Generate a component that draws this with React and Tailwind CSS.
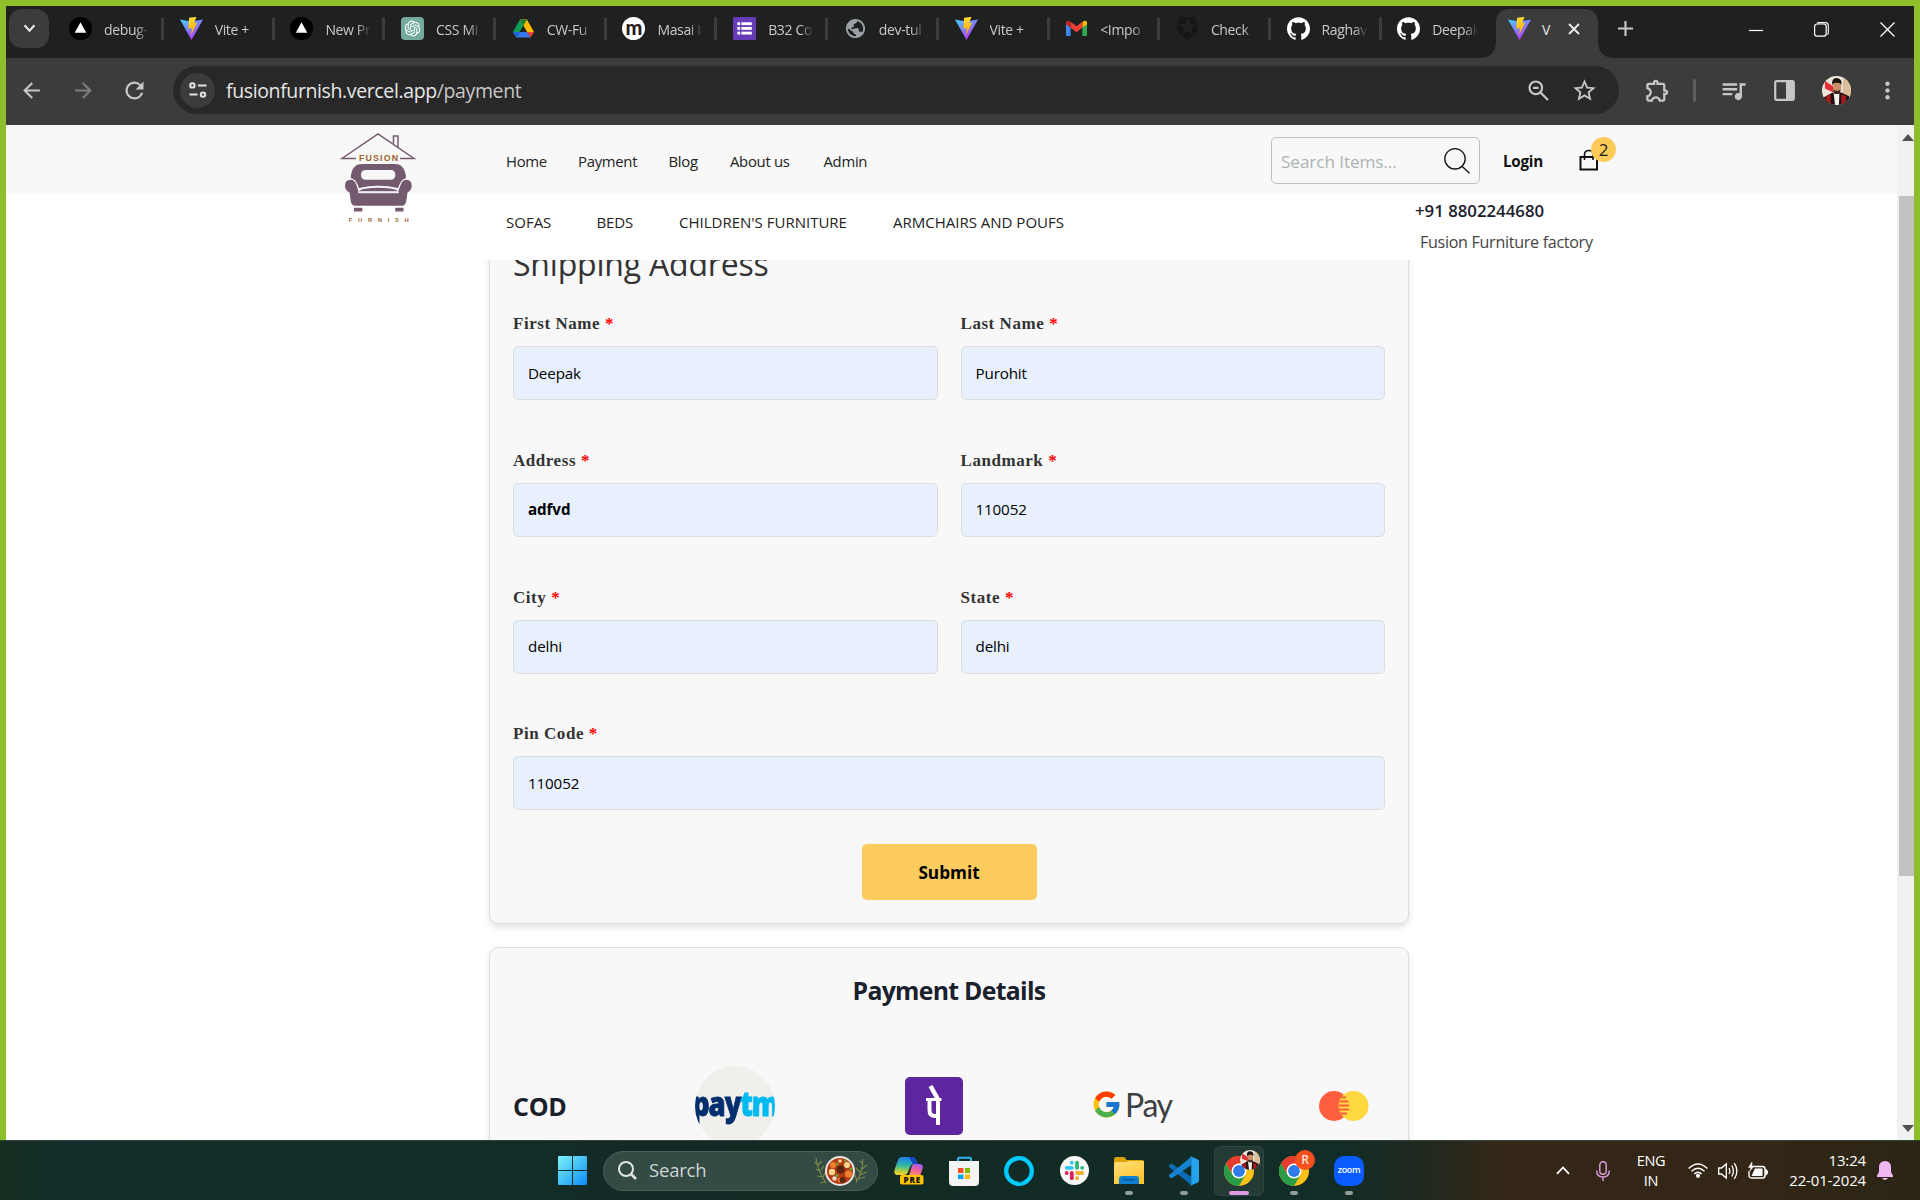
import React from "react";
import { FcGoogle } from "react-icons/fc";
import { RiOpenaiFill } from "react-icons/ri";
import { SiGithub, SiAuth0 } from "react-icons/si";
import {
  MdArrowBack,
  MdArrowForward,
  MdRefresh,
  MdStarBorder,
  MdOutlineExtension,
  MdQueueMusic,
  MdMoreVert,
  MdPublic,
} from "react-icons/md";

/* ---------- favicons ---------- */

const VercelIcon = () => (
  <svg viewBox="0 0 24 24" className="size-[23px]">
    <circle cx="12" cy="12" r="12" fill="#000" />
    <path d="M12 5.5 18 16.5H6Z" fill="#fff" />
  </svg>
);

const ViteIcon = () => (
  <svg viewBox="0 0 24 24" className="size-[23px] shrink-0">
    <defs>
      <linearGradient id="vite-body" x1="0" y1="0" x2="0.6" y2="1">
        <stop offset="0" stopColor="#41d1ff" />
        <stop offset="1" stopColor="#bd34fe" />
      </linearGradient>
      <linearGradient id="vite-bolt" x1="0" y1="0" x2="0.2" y2="1">
        <stop offset="0" stopColor="#ffea83" />
        <stop offset="0.1" stopColor="#ffdd35" />
        <stop offset="1" stopColor="#ffa800" />
      </linearGradient>
    </defs>
    <path d="M0 2.6 12 4.7 24 2.6 12 24Z" fill="url(#vite-body)" />
    <path d="M9.5.9 17.2-.2 14.7 6.4 18 5.8 11.6 18.8 12.4 11.4 8.6 12.2Z" fill="url(#vite-bolt)" />
  </svg>
);

const GptIcon = () => (
  <div className="flex size-[23px] items-center justify-center rounded-[4px] bg-[#74aa9c]">
    <RiOpenaiFill className="size-[19px] text-white" />
  </div>
);

const DriveIcon = () => (
  <svg viewBox="0 0 24 24" className="size-[23px]">
    <path d="M8.3 2.5 12 8.9 4.3 21.5 1 15.6Z" fill="#0f9d58" />
    <path d="M8.3 2.5H15.6L23 15.6H15.8Z" fill="#ffba00" />
    <path d="M8.3 2.5H15.6L12 8.9Z" fill="#188038" />
    <path d="M8.2 15.6H15.8L19.4 21.5H4.6Z" fill="#3779e8" />
    <path d="M1 15.6H8.2L4.6 21.5Z" fill="#2063dd" />
    <path d="M15.8 15.6H23L19.4 21.5Z" fill="#ea4335" />
  </svg>
);

const MasaiIcon = () => (
  <div className="flex size-[23px] items-center justify-center rounded-full bg-white font-['Lato',sans-serif] text-[20px] leading-[18px] font-black text-[#2c1a1a]">
    <span className="-mt-[4px]">m</span>
  </div>
);

const FormsIcon = () => (
  <svg viewBox="0 0 24 24" className="size-[23px]">
    <rect width="24" height="24" rx="1.5" fill="#673ab7" />
    <g fill="#fff">
      <rect x="4.5" y="5.5" width="3" height="3" />
      <rect x="8.8" y="5.5" width="10.8" height="3" />
      <rect x="4.5" y="10.4" width="3" height="3" />
      <rect x="8.8" y="10.4" width="10.8" height="3" />
      <rect x="4.5" y="15.3" width="3" height="3" />
      <rect x="8.8" y="15.3" width="10.8" height="3" />
    </g>
  </svg>
);

const GmailIcon = () => (
  <svg viewBox="0 0 24 24" className="size-[23px]">
    <path d="M1 6.5V18.6Q1 19.9 2.4 19.9H5.9V10.5Z" fill="#4285f4" />
    <path d="M18.1 10.5V19.9H21.6Q23 19.9 23 18.6V6.5Z" fill="#34a853" />
    <path d="M18.1 5.3V11.2L23 7.5V5.8Q23 3.8 21 3.8 20 3.8 18.1 5.3Z" fill="#fbbc04" />
    <path d="M5.9 11.2V5L12 9.6 18.1 5V11.2L12 15.8Z" fill="#ea4335" />
    <path d="M1 5.8V7.5L5.9 11.2V5.3Q4 3.8 3 3.8 1 3.8 1 5.8Z" fill="#c5221f" />
  </svg>
);

const GlobeIcon = () => <MdPublic className="size-[25px] -rotate-12 text-[#9aa0a6]" />;
const AuthIcon = () => <SiAuth0 className="size-[23px] text-[#151617]" />;
const GithubIcon = () => <SiGithub className="size-[23px] text-white" />;

const TABS = [
  ["debug-", VercelIcon],
  ["Vite +", ViteIcon],
  ["New Pr", VercelIcon],
  ["CSS Mi", GptIcon],
  ["CW-Fu", DriveIcon],
  ["Masai I", MasaiIcon],
  ["B32 Co", FormsIcon],
  ["dev-tul", GlobeIcon],
  ["Vite +", ViteIcon],
  ["<Impo", GmailIcon],
  ["Check", AuthIcon],
  ["Raghav", GithubIcon],
  ["Deepak", GithubIcon],
];

/* ---------- browser chrome ---------- */

function TabStrip() {
  return (
    <div className="flex h-[52px] items-start bg-[#1f2120] pt-[3px] pl-[3px]">
      <button className="flex h-[39px] w-10 items-center justify-center rounded-[13px] bg-[#3c3c3c]">
        <svg viewBox="0 0 14 10" className="h-[9px] w-[13px]">
          <path d="M1.5 1.5 7 7.5 12.5 1.5" fill="none" stroke="#e6e6e6" strokeWidth="2.4" />
        </svg>
      </button>
      <div className="ml-1 flex h-[49px] pt-2">
        {TABS.map(([title, Icon], i) => (
          <div key={i} className="flex h-[23px] w-[110.7px] items-center pl-4">
            <div className="flex w-[23px] shrink-0 justify-center">
              <Icon />
            </div>
            <span className="mt-[3px] ml-3 w-[54px] shrink-0 text-[14px] leading-6 tracking-[-0.35px] whitespace-nowrap text-[#c8c9c9] [mask-image:linear-gradient(to_right,#000_32px,transparent_46px)]">
              {title}
            </span>
            {i < TABS.length - 1 && <i className="ml-[3px] h-[23px] w-[3px] shrink-0 rounded-full bg-[#3c3c3c]" />}
          </div>
        ))}
      </div>
      <div className="-ml-[13px] flex h-[49px]">
        <svg viewBox="0 0 17 17" className="mt-8 size-[17px]">
          <path d="M17 0V17H0Q17 17 17 0Z" fill="#3c3c3c" />
        </svg>
        <div className="flex h-[49px] w-[102px] items-start rounded-t-[13px] bg-[#3c3c3c] pt-2 pl-3">
          <ViteIcon />
          <span className="mt-px ml-[11px] w-3 text-[14px] leading-6 text-[#e3e3e3]">V</span>
          <svg viewBox="0 0 12 12" className="mt-[6px] ml-[14px] size-3">
            <path d="M1 1 11 11M11 1 1 11" stroke="#e8e8e8" strokeWidth="2" />
          </svg>
        </div>
        <svg viewBox="0 0 17 17" className="mt-8 size-[17px]">
          <path d="M0 0V17H17Q0 17 0 0Z" fill="#3c3c3c" />
        </svg>
      </div>
      <svg viewBox="0 0 14 14" className="mt-[12px] ml-[3px] size-[15px]">
        <path d="M7 0V14M0 7H14" stroke="#c7c7c7" strokeWidth="2" />
      </svg>
      <div className="mt-[13px] mr-[19px] ml-auto flex items-center gap-[51px]">
        <svg viewBox="0 0 14 14" className="size-[14px]">
          <path d="M0 7.5H14" stroke="#fff" strokeWidth="1.2" />
        </svg>
        <svg viewBox="0 0 15 15" className="size-[15px]">
          <rect x="0.6" y="2" width="11.6" height="12.2" rx="2.4" fill="none" stroke="#fff" strokeWidth="1.2" />
          <path d="M3 1.2Q3.6.6 5 .6H11.4Q14.3.6 14.3 3.6V10.4Q14.3 11.8 13.4 12.6" fill="none" stroke="#fff" strokeWidth="1.1" />
        </svg>
        <svg viewBox="0 0 15 15" className="size-[15px]">
          <path d="M.5.5 14.5 14.5M14.5.5.5 14.5" stroke="#fff" strokeWidth="1.3" />
        </svg>
      </div>
    </div>
  );
}

const Avatar = ({ className }) => (
  <svg viewBox="0 0 30 30" className={className}>
    <defs>
      <clipPath id="avatar-clip">
        <circle cx="15" cy="15" r="15" />
      </clipPath>
    </defs>
    <g clipPath="url(#avatar-clip)">
      <rect width="30" height="30" fill="#eee6da" />
      <path d="M22 0H30V22H21Z" fill="#dcbf9a" />
      <path d="M3 5 12 11V17L3 13Z" fill="#e0302f" />
      <path d="M2 30V22L11 17H20L28 21V30Z" fill="#201113" />
      <path d="M4 21 9 19V30H5ZM20 19 25 21 24 30H20Z" fill="#a81a1c" />
      <path d="M12 17H18L17.500 30H13.500Z" fill="#f4f2f0" />
      <ellipse cx="15.5" cy="11.5" rx="4.3" ry="6" fill="#c98d68" />
      <path d="M11.5 14Q15.5 17 19.5 14L18 18.5H13Z" fill="#3d241a" />
      <path d="M10.500 10Q9.500 2 15 2 21.500 2.500 20 9.500 19 6.500 15 7 11.500 6.500 10.500 10Z" fill="#1c1210" />
    </g>
  </svg>
);

function Toolbar() {
  return (
    <div className="flex h-[67px] items-center bg-[#3c3c3c] pb-[3px] text-[#c7c7c7]">
      <MdArrowBack className="ml-[13px] size-[25px]" />
      <MdArrowForward className="ml-[27px] size-[25px] text-[#7d7d7d]" />
      <MdRefresh className="ml-[25px] size-[27px]" />
      <div className="ml-[25px] flex h-12 w-[1446px] items-center rounded-full bg-[#282828] pl-[7px]">
        <div className="flex size-[35px] items-center justify-center rounded-full bg-[#3c3c3c]">
          <svg viewBox="0 0 18 16" className="h-[16px] w-[18px]" fill="none" stroke="#e3e3e3" strokeWidth="2">
            <circle cx="3.4" cy="3.4" r="2.2" />
            <path d="M9 3.4H17.5M0.500 12.6H8.5" />
            <circle cx="14" cy="12.6" r="2.2" />
          </svg>
        </div>
        <span className="mt-[2px] ml-[11px] text-[19.5px] leading-7 tracking-[-0.38px] text-[#e6e6e6]">
          fusionfurnish.vercel.app<span className="text-[#c7c7c7]">/payment</span>
        </span>
        <svg viewBox="0 0 21 21" className="mr-px ml-auto size-[21px]" fill="none" stroke="#c7c7c7" strokeWidth="2.2">
          <circle cx="7.800" cy="7.800" r="6.300" />
          <path d="M12.500 12.500 20 20M5 7.800H10.600" />
        </svg>
        <MdStarBorder className="mr-[21px] ml-[21px] size-[27px]" />
      </div>
      <MdOutlineExtension className="ml-[25px] size-[27px]" />
      <i className="ml-[22px] h-[23px] w-[3px] rounded-full bg-[#5e5e5e]" />
      <MdQueueMusic className="ml-[23px] size-[29px]" />
      <svg viewBox="0 0 21 21" className="ml-[26px] size-[21px]">
        <rect x="1.200" y="1.200" width="18.600" height="18.600" rx="1.500" fill="none" stroke="#c7c7c7" strokeWidth="2.200" />
        <rect x="12" y="1" width="8" height="19" fill="#c7c7c7" />
      </svg>
      <Avatar className="ml-[27px] size-[29px]" />
      <MdMoreVert className="ml-[23px] size-[27px]" />
    </div>
  );
}

/* ---------- site header ---------- */

const Logo = () => (
  <svg viewBox="0 0 76 92" className="absolute top-[7px] left-[334px] h-[92px] w-[76px]">
    <g fill="none" stroke="#745a6e" strokeWidth="1.500">
      <path d="M16 26.500H2L38 2 74 26.500H60" />
      <path d="M53.500 11.500V4H58V15.500" />
    </g>
    <text x="38.500" y="29" textAnchor="middle" fontSize="8.800" fontWeight="700" fill="#9a6531" textLength="39" fontFamily="Liberation Sans, sans-serif">
      FUSION
    </text>
    <path
      fillRule="evenodd"
      d="M10.700 45Q12 32 22 32H55Q64.500 32 66 45 66 46.500 63 47.500 60.500 49 58 56Q38.500 51.500 19 56 16.500 49 14 47.500 10.700 46.500 10.700 45ZM26 38Q21 38 21 43 21 47.700 26 47.700H50.500Q55.300 47.700 55.300 43 55.300 38 50.500 38Z"
      fill="#745a6e"
    />
    <path
      d="M5 54Q5 47.700 10.500 47.700 14.500 47.700 16 52L18.300 58.600V61H58.500V58.600L61 52Q62.500 47.700 66.500 47.700 71.700 47.700 71.700 54 71.700 58 67.500 60.500L66.300 69Q65.500 73.700 62 73.700H15Q11.500 73.700 10.700 69L9.500 60.500Q5 58 5 54Z"
      fill="#745a6e"
    />
    <path d="M18.500 59.300Q22 56 38.500 55.800 55 56 58 59.300Z" fill="#745a6e" />
    <path d="M18.500 60.500H58.300" stroke="#f3eef2" strokeWidth="1.300" />
    <path d="M14 75.800H22.300V79.500H14ZM55.200 75.800H63.500V79.500H55.200Z" fill="#745a6e" />
    <text x="8.800" y="90.300" fontSize="5.800" fontWeight="700" fill="#9a6a3c" textLength="60" fontFamily="Liberation Sans, sans-serif">
      FURNISH
    </text>
  </svg>
);

function SiteHeader() {
  return (
    <header className="relative h-[135px] w-[1891px] bg-white">
      <div className="flex h-[69px] items-center bg-[#f8f8f8] pl-[500px]">
        <nav className="flex gap-[30.5px] pt-[3px] text-[14.9px] leading-6 tracking-[-0.3px] whitespace-nowrap text-[#222]">
          <a className="w-[41.500px]">Home</a>
          <a className="w-[60px]">Payment</a>
          <a className="w-[31px]">Blog</a>
          <a className="w-[63px]">About us</a>
          <a>Admin</a>
        </nav>
        <div className="mt-[2px] ml-auto flex h-[47px] w-[209px] items-center justify-between rounded-[5px] border border-[#bfbfbf] pr-[9px] pl-[9px]">
          <span className="mt-[2px] text-[17.200px] leading-7 tracking-[-0.1px] text-[#adb3b3]">Search Items...</span>
          <svg viewBox="0 0 26 26" className="size-[26px]" fill="none" stroke="#111" strokeWidth="1.300">
            <circle cx="11" cy="10.800" r="10.200" />
            <path d="M18 18.200 25.500 25.200" />
          </svg>
        </div>
        <a className="mt-[3px] ml-[23px] w-[76px] text-[15.200px] leading-6 font-bold tracking-[-0.250px] text-[#111]">Login</a>
        <div className="relative mt-[3px] mr-[298px] h-6 w-5">
          <svg viewBox="0 0 20 22" className="h-[22px] w-5" fill="none" stroke="#111" strokeWidth="2">
            <path d="M1.500 8H18V20.500H1.500Z" />
            <path d="M5.500 11V5.500Q5.500 1.500 9.800 1.500 14 1.500 14 5.500V11" strokeWidth="1.600" />
          </svg>
          <span className="absolute -top-[12px] left-[12px] flex size-[25px] items-center justify-center rounded-full bg-[#fccb5a] text-[17px] leading-none text-[#222]">
            2
          </span>
        </div>
      </div>
      <div className="flex h-[66px] pl-[500px] text-[#222]">
        <nav className="mt-[16px] flex gap-[45.500px] text-[15px] leading-6 whitespace-nowrap">
          <a className="w-[45px]">SOFAS</a>
          <a className="w-[37px] tracking-[-0.100px]">BEDS</a>
          <a className="w-[168.500px]">CHILDREN'S FURNITURE</a>
          <a>ARMCHAIRS AND POUFS</a>
        </nav>
        <div className="mt-[5px] mr-[298px] ml-auto w-[184px] whitespace-nowrap">
          <p className="text-[16.800px] leading-6 font-semibold text-[#1a202c]">+91 8802244680</p>
          <p className="mt-[7px] ml-[5px] text-[16.100px] leading-6 tracking-[-0.300px] text-[#444]">Fusion Furniture factory</p>
        </div>
      </div>
      <Logo />
    </header>
  );
}

/* ---------- form ---------- */

function Field({ label, value, bold, wide }) {
  return (
    <div className={wide ? "col-span-2" : ""}>
      <label className="block h-6 font-['Liberation_Serif',serif] text-[17px] leading-[25px] font-bold tracking-[0.550px] text-[#333]">
        {label} <span className="text-[#f00]">*</span>
      </label>
      <div
        className={
          "mt-[11px] flex h-[54px] items-center rounded-[5px] border border-[#ddd] bg-[#e8f0fe] px-[14px] text-[15.200px] text-black " +
          (bold ? "font-bold tracking-[-0.100px]" : "tracking-[-0.150px]")
        }
      >
        {value}
      </div>
    </div>
  );
}

const PhonePe = () => (
  <svg viewBox="0 0 58 58" className="size-[58px] rounded-[5px] bg-[#5f259f]" fill="none" stroke="#fff">
    <path d="M21 22.500H36.500" strokeWidth="3.200" />
    <path d="M32.500 21.500 25.500 9" strokeWidth="4.500" strokeLinejoin="round" />
    <path d="M24.500 22.500V33Q24.500 39 30 39 32 39 33.500 38.500" strokeWidth="4" />
    <path d="M33 22V48" strokeWidth="4" />
  </svg>
);

function Payment() {
  return (
    <section className="mx-auto mt-[23px] h-[300px] w-[920px] rounded-[9px] border border-[#ddd] bg-[#f8f8f8] px-[23px] pt-[22px] shadow-[0_4px_6px_rgba(0,0,0,0.1)]">
      <h2 className="text-center text-[24.800px] leading-10 font-bold tracking-[-0.700px] text-[#1a202c]">Payment Details</h2>
      <div className="mt-[56px] flex h-20 items-center justify-between">
        <span className="mt-[2px] w-[52px] text-[25px] font-bold tracking-[-0.300px] text-[#1a202c]">COD</span>
        <div className="flex size-20 items-center justify-center overflow-hidden rounded-full bg-[#f0efeb]">
          <span className="mb-[7px] flex scale-x-[0.860] scale-y-[1.050] font-['Open_Sans',sans-serif] text-[32px] leading-none font-extrabold tracking-[-1.300px] text-[#002e6e] [-webkit-text-stroke:0.8px]">
            pay<span className="text-[#00baf2]">tm</span>
          </span>
        </div>
        <PhonePe />
        <div className="flex h-8 w-20 items-center">
          <FcGoogle className="-mt-[3px] -ml-[2px] size-[31px] shrink-0" />
          <span className="-mt-[3px] ml-[3px] font-['Lato',sans-serif] text-[32px] leading-8 tracking-[-1.300px] text-[#3c4043]">Pay</span>
        </div>
        <svg viewBox="0 0 82 32" className="h-8 w-[82px]">
          <circle cx="31" cy="16" r="15" fill="#ff5f40" />
          <circle cx="50.500" cy="16" r="15" fill="#ffd840" />
          <path d="M38.500 7.500H43M36.500 11.500H45.500M36 15.500H46M36 19.500H46M37.500 23.500H44" stroke="#ff5f40" strokeWidth="2" />
        </svg>
      </div>
    </section>
  );
}

function Page() {
  return (
    <main className="h-[880px] w-[1891px] overflow-hidden bg-white pr-[5px]">
      <section className="mx-auto -mt-10 h-[704px] w-[920px] rounded-[9px] border border-[#ddd] bg-[#f8f8f8] px-[23px] pt-5 shadow-[0_4px_6px_rgba(0,0,0,0.1)]">
        <h1 className="h-11 text-[32px] leading-[45px] tracking-[-0.200px] text-[#333]">Shipping Address</h1>
        <div className="mt-[26px] grid grid-cols-2 gap-x-[23px] gap-y-[47.800px]">
          <Field label="First Name" value="Deepak" />
          <Field label="Last Name" value="Purohit" />
          <Field label="Address" value="adfvd" bold />
          <Field label="Landmark" value="110052" />
          <Field label="City" value="delhi" />
          <Field label="State" value="delhi" />
          <Field label="Pin Code" value="110052" wide />
        </div>
        <button className="mx-auto mt-[34px] flex h-14 w-[175px] items-center justify-center rounded-[5px] bg-[#fccb5d] pt-px text-[17.200px] font-bold text-black">
          Submit
        </button>
      </section>
      <Payment />
    </main>
  );
}

function Scrollbar() {
  return (
    <div className="flex w-[17px] flex-col items-end justify-between bg-[#f1f1f1] pt-[9px] pb-2">
      <svg viewBox="0 0 12 7" className="h-[7px] w-3">
        <path d="M0 7 6 0 12 7Z" fill="#505050" />
      </svg>
      <div className="mt-[55px] mb-auto h-[680px] w-[15px] bg-[#c1c1c1]" />
      <svg viewBox="0 0 12 7" className="h-[7px] w-3">
        <path d="M0 0 6 7 12 0Z" fill="#505050" />
      </svg>
    </div>
  );
}

/* ---------- taskbar ---------- */

const Windows = () => (
  <svg viewBox="0 0 29 29" className="size-[29px]">
    <defs>
      <linearGradient id="win" x1="0" y1="0" x2="29" y2="29" gradientUnits="userSpaceOnUse">
        <stop offset="0" stopColor="#7df3fd" />
        <stop offset="1" stopColor="#0a8cf5" />
      </linearGradient>
    </defs>
    <path d="M0 1Q0 0 1 0H14V14H0ZM15 0H28Q29 0 29 1V14H15ZM0 15H14V29H1Q0 29 0 28ZM15 15H29V28Q29 29 28 29H15Z" fill="url(#win)" />
  </svg>
);

const Food = () => (
  <svg viewBox="0 0 56 30" className="h-[30px] w-[56px]">
    <g stroke="#7d8c45" strokeWidth="1.100" fill="none">
      <path d="M2 2Q4 16 12 27M4 9 1 6M4 9 8 5M6 15 2 13M6 15 10 10M9 21 3 20M9 21 12 15M11 26 6 27" />
      <path d="M49 3Q49 15 42 27M49 8 46 5M48 13 53 9M47 17 42 12M46 19 53 16M44 23 51 21M43 25 41 19" />
    </g>
    <circle cx="26" cy="15" r="15" fill="#ece5df" />
    <circle cx="26" cy="15" r="13" fill="#b23a16" />
    <g fill="#f0802a">
      <circle cx="19" cy="9" r="3" />
      <circle cx="34.500" cy="18" r="3.500" />
      <circle cx="26" cy="24" r="2.500" />
    </g>
    <g fill="#f6d98e">
      <circle cx="33" cy="9" r="3" />
      <circle cx="18" cy="16" r="3.200" />
      <circle cx="26" cy="5" r="1.800" />
    </g>
    <g fill="#5b2413">
      <circle cx="26.500" cy="13.500" r="4" />
      <circle cx="28.500" cy="24" r="3" />
    </g>
    <circle cx="20.500" cy="22.500" r="2.200" fill="#e9dccb" />
    <g fill="#6fa031">
      <circle cx="23" cy="8" r="1.500" />
      <circle cx="37" cy="13" r="1.500" />
      <circle cx="23" cy="19.500" r="1.500" />
      <circle cx="31" cy="4.500" r="1.300" />
    </g>
  </svg>
);

const Copilot = () => (
  <svg viewBox="0 0 30 29" className="h-[29px] w-[30px]">
    <defs>
      <linearGradient id="cop-a" x1="0.300" y1="0" x2="0.200" y2="1">
        <stop offset="0" stopColor="#1b7fe8" />
        <stop offset="0.450" stopColor="#2fb7a8" />
        <stop offset="0.800" stopColor="#b8d13c" />
        <stop offset="1" stopColor="#ffcb2f" />
      </linearGradient>
      <linearGradient id="cop-b" x1="0.600" y1="0" x2="0.300" y2="1">
        <stop offset="0" stopColor="#a45cf0" />
        <stop offset="0.500" stopColor="#ee5f9a" />
        <stop offset="1" stopColor="#ff9a5a" />
      </linearGradient>
    </defs>
    <path d="M8 1H18Q21 1 22 4L23.500 8H20Q17 8 16 11L13.500 17Q12.500 19 10 19H4Q-.5 19 .5 14L4 4Q5 1 8 1Z" fill="url(#cop-a)" />
    <path d="M11 1H18Q21 1 22 4L23.500 8H19L15 1Z" fill="#1246c4" />
    <path d="M20 8H25Q30 8 28.500 13L26 20H15L17.500 11Q18.500 8 20 8Z" fill="url(#cop-b)" />
    <rect x="6" y="19" width="23.500" height="9.500" rx="2" fill="#ffc400" />
    <text x="17.800" y="26.600" textAnchor="middle" fontSize="8" fontWeight="800" textLength="16.500" fill="#111" fontFamily="Open Sans, sans-serif">
      PRE
    </text>
  </svg>
);

const Store = () => (
  <svg viewBox="0 0 30 30" className="size-[30px]">
    <path d="M9 6V3Q9 1.800 10.200 1.800H20.800Q22 1.800 22 3V6" fill="none" stroke="#2fb5f0" strokeWidth="2" />
    <path d="M0 5H30V26Q30 30 26 30H4Q0 30 0 26Z" fill="#f3f3f3" />
    <path d="M9 12H14.500V17H9Z" fill="#f25022" />
    <path d="M16 12H21V17H16Z" fill="#7fba00" />
    <path d="M9 18.500H14.500V23H9Z" fill="#00a4ef" />
    <path d="M16 18.500H21V23H16Z" fill="#ffb900" />
  </svg>
);

const Alexa = () => (
  <svg viewBox="0 0 30 30" className="size-[30px]">
    <circle cx="15" cy="15" r="12.800" fill="none" stroke="#00caff" strokeWidth="4.300" />
    <path d="M12.500 25.300Q14.800 25.800 14.300 30L12 29.700Z" fill="#00caff" />
    <path d="M27.500 17Q24 25.500 14.300 30 23 30 27.500 22Z" fill="#00caff" />
    <path d="M15 25.500V27Q20 25 23 22 19.500 25.400 15 25.500Z" fill="#132a24" />
  </svg>
);

const Slack = () => (
  <svg viewBox="0 0 29 29" className="size-[29px]">
    <circle cx="14.500" cy="14.500" r="14.500" fill="#f7f7f7" />
    <g strokeLinecap="round" strokeWidth="3.800" fill="none">
      <path d="M6.700 11.800H11.800" stroke="#36c5f0" />
      <path d="M17 6.700V11.800" stroke="#2eb67d" />
      <path d="M17 17H22.200" stroke="#ecb22e" />
      <path d="M11.800 17V22.200" stroke="#e01e5a" />
      <path d="M11.800 6.700h.01" stroke="#36c5f0" />
      <path d="M22.200 11.800h.01" stroke="#2eb67d" />
      <path d="M17 22.200h.01" stroke="#ecb22e" />
      <path d="M6.700 17h.01" stroke="#e01e5a" />
    </g>
  </svg>
);

const Folder = () => (
  <svg viewBox="0 0 30 27" className="h-[27px] w-[30px]">
    <defs>
      <linearGradient id="folder" x1="0" y1="0" x2="0.600" y2="1">
        <stop offset="0" stopColor="#ffe07a" />
        <stop offset="1" stopColor="#ffc32e" />
      </linearGradient>
    </defs>
    <path d="M0 2Q0 0 2 0H9Q10.500 0 11.500 1.200L12.500 3H28Q30 3 30 5V9H0Z" fill="#e0a106" />
    <path d="M0 7.500Q0 5 2.500 5H12L14 4H30V27H0Z" fill="url(#folder)" />
    <path d="M5 27V22Q5 19 8 19H22Q25 19 25 22V27Z" fill="#0f7fd0" />
    <path d="M9 22.800H21" stroke="#0a4d94" strokeWidth="1.300" />
  </svg>
);

const VsCode = () => (
  <svg viewBox="0 0 30 30" className="size-[30px]">
    <path d="M2.500 7.500 0 9.500V11L22 29 22.500 21Z" fill="#0b6cb3" />
    <path d="M2.500 22.500 0 20.500V19L22 1 22.500 9Z" fill="#1583cf" />
    <path d="M21.800.4 28.500 3.200Q30 4 30 5.500V24.500Q30 26 28.500 26.800L21.800 29.600Q20.800 30 20 29.200 22.200 30 22.200 27.500V2.500Q22.200 0 20 .8 20.800 0 21.800.4Z" fill="#25a2f0" />
  </svg>
);

const Chrome = () => (
  <svg viewBox="0 0 30 30" className="size-[30px]">
    <circle cx="15" cy="15" r="15" fill="#fbc116" />
    <path d="M2 7.500A15 15 0 0 1 28 7.500L15 7.500 8.500 18.800Z" fill="#e33b2e" />
    <path d="M2 7.500A15 15 0 0 0 15 30L21.500 18.800H8.500Z" fill="#2b9c48" />
    <circle cx="15" cy="15" r="7.500" fill="#fff" />
    <circle cx="15" cy="15" r="5.900" fill="#2f7bea" />
  </svg>
);

const Zoom = () => (
  <div className="flex size-[30px] items-center justify-center rounded-[10px] bg-[#0b5cff] pb-[2px] text-[9px] leading-none font-semibold tracking-[-0.300px] text-white">
    zoom
  </div>
);

function TaskItem({ children, dot, active }) {
  return (
    <div
      className={
        "relative flex h-[50px] w-[50px] items-center justify-center rounded-[6px] " +
        (active ? "border border-[#2f4640] bg-[#233a35]" : "")
      }
    >
      {children}
      {dot && <i className="absolute bottom-px left-[21px] h-1 w-2 rounded-full bg-[#929c99]" />}
      {active && <i className="absolute bottom-0 left-[14px] h-1 w-5 rounded-full bg-[#dd9ae2]" />}
    </div>
  );
}

function Taskbar() {
  return (
    <footer className="flex h-[60px] items-center border-t border-[#36453f] bg-[linear-gradient(90deg,#142e20_0px,#122d29_60px,#122c28_520px,#132a24_800px,#122c27_1340px,#22291e_1430px,#342718_1500px,#332616_1760px,#2b2515_1920px)] text-white">
      <div className="ml-[558px]">
        <Windows />
      </div>
      <div className="ml-4 flex h-10 w-[275px] items-center rounded-full border border-[#4a5d57] bg-[#344a45] pr-[7px] pl-[14px]">
        <svg viewBox="0 0 19 19" className="size-[19px]" fill="none" stroke="#e2e5e4" strokeWidth="2">
          <circle cx="8" cy="8" r="7" />
          <path d="M13 13 18 18" strokeWidth="2.600" />
        </svg>
        <span className="ml-[12px] pb-px text-[18.500px] tracking-[-0.200px] text-[#cfd5d3]">Search</span>
        <div className="ml-auto">
          <Food />
        </div>
      </div>
      <div className="ml-[6px] flex gap-[5px]">
        <TaskItem><Copilot /></TaskItem>
        <TaskItem><Store /></TaskItem>
        <TaskItem><Alexa /></TaskItem>
        <TaskItem><Slack /></TaskItem>
        <TaskItem dot><Folder /></TaskItem>
        <TaskItem dot><VsCode /></TaskItem>
        <TaskItem active>
          <Chrome />
          <Avatar className="absolute top-[3px] left-[25px] size-5" />
        </TaskItem>
        <TaskItem dot>
          <Chrome />
          <span className="absolute top-[4px] left-[26px] flex size-5 items-center justify-center rounded-full bg-[#f4511e] text-[12px] leading-none font-semibold text-[#fbe3da]">
            R
          </span>
        </TaskItem>
        <TaskItem dot><Zoom /></TaskItem>
      </div>
      <div className="mr-[27px] ml-auto flex items-center">
        <svg viewBox="0 0 14 9" className="h-[9px] w-[14px]">
          <path d="M1 7.800 7 1.500 13 7.800" fill="none" stroke="#fff" strokeWidth="1.800" />
        </svg>
        <svg viewBox="0 0 14 20" className="ml-[26px] h-5 w-[14px]" fill="none" stroke="#dd9fe0" strokeWidth="1.400">
          <rect x="3.800" y="0.700" width="6.400" height="12.600" rx="3.200" />
          <path d="M.7 9.500Q.7 16 7 16 13.300 16 13.300 9.500M7 16V20" />
        </svg>
        <div className="ml-[26px] w-[30px] text-center text-[14.500px] leading-5 tracking-[-0.300px]">
          <p>ENG</p>
          <p>IN</p>
        </div>
        <svg viewBox="0 0 20 15" className="ml-[22px] h-[15px] w-5" fill="none" stroke="#fff" strokeWidth="1.400">
          <path d="M.6 5.500Q10-3.500 19.400 5.500M3.500 8.300Q10 2.200 16.500 8.300M6.300 11Q10 7.500 13.700 11" />
          <circle cx="10" cy="12.800" r="1.400" fill="#fff" />
        </svg>
        <svg viewBox="0 0 20 18" className="ml-[10px] h-[18px] w-5" fill="none" stroke="#fff" strokeWidth="1.300">
          <path d="M.7 6H3.500L8.300 2V16L3.500 12H.7Z" />
          <path d="M11 6Q12.700 9 11 12M13.800 3.500Q17 9 13.800 14.500M16.300 1.200Q21.500 9 16.300 16.800" />
        </svg>
        <svg viewBox="0 0 20 17" className="ml-[10px] h-[17px] w-5" fill="none" stroke="#fff" strokeWidth="1.400">
          <path d="M5.500 4.500H14.500Q17 4.500 17 7V13.500Q17 16 14.500 16H3.500Q1 16 1 13.500V9" />
          <path d="M3.500 14 7 6.500H14.500V14Z" fill="#fff" stroke="none" />
          <path d="M18 8V12.500L19.500 11V9.500Z" fill="#fff" />
          <path d="M4 0 .5 5.500H3L2 9 6 4H3.800Z" fill="#fff" strokeWidth="0.500" />
        </svg>
        <div className="-mt-[2px] ml-[15px] w-[83px] text-right text-[15px] leading-5 tracking-[-0.150px] whitespace-nowrap">
          <p>13:24</p>
          <p>22-01-2024</p>
        </div>
        <svg viewBox="0 0 16 19" className="ml-[11px] h-[19px] w-4" fill="#f0b6f2">
          <path d="M8 0Q14 0 14 6.500V11L16 14.500V16H0V14.500L2 11V6.500Q2 0 8 0ZM5 17H11Q10 19 8 19 6 19 5 17Z" />
        </svg>
      </div>
    </footer>
  );
}

export default function App() {
  return (
    <div className="flex h-[1200px] w-[1920px] flex-col overflow-hidden bg-[#8dbf28] font-['Open_Sans','Noto_Sans',sans-serif]">
      <div className="mx-[6px] mt-[6px] flex h-[1134px] flex-col">
        <TabStrip />
        <Toolbar />
        <div className="flex h-[1015px] bg-white">
          <div>
            <SiteHeader />
            <Page />
          </div>
          <Scrollbar />
        </div>
      </div>
      <Taskbar />
    </div>
  );
}
